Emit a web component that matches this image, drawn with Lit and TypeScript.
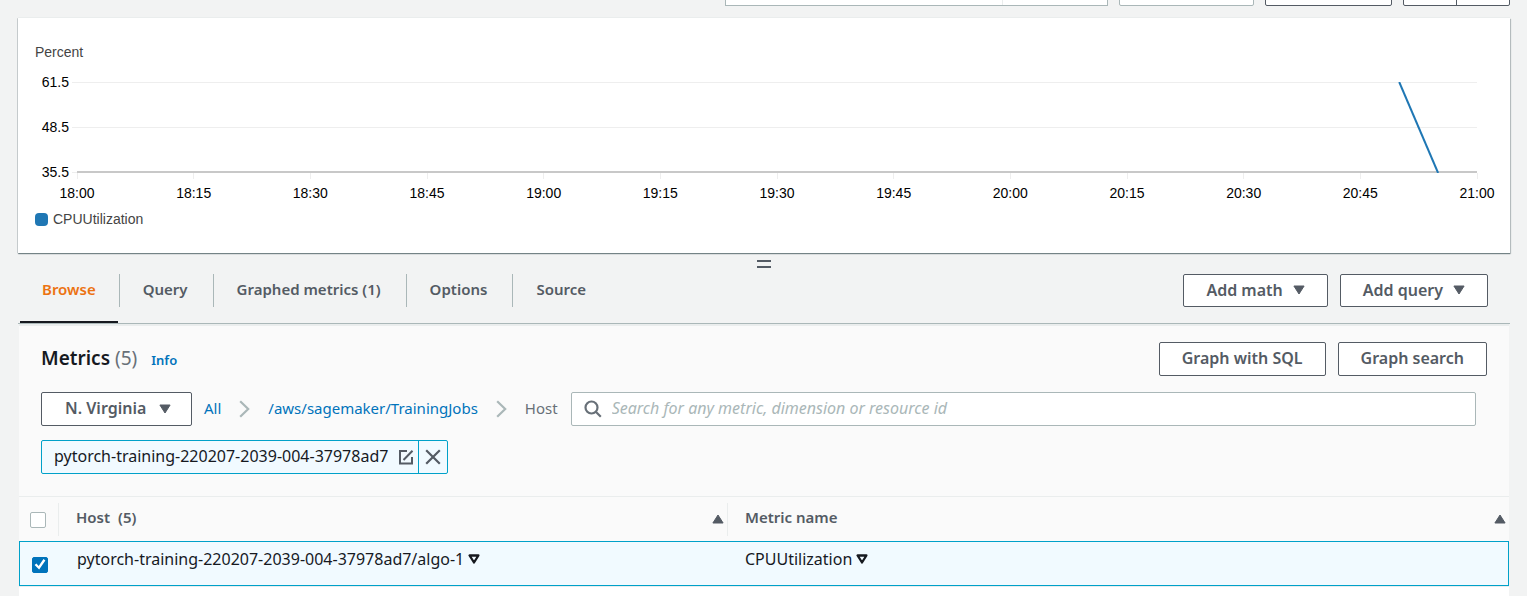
import { LitElement, html, css, svg } from "lit";
import { customElement, state } from "lit/decorators.js";

const caretDown = html`<svg class="caret" viewBox="0 0 12 10" width="12" height="10" aria-hidden="true"><path d="M.9 1h10.200L6 9z" fill="currentColor" stroke="currentColor" stroke-linejoin="round"/></svg>`;
const caretUp = html`<svg class="caret" viewBox="0 0 12 10" width="12" height="10" aria-hidden="true"><path d="M.9 9h10.200L6 1z" fill="currentColor" stroke="currentColor" stroke-linejoin="round"/></svg>`;
const caretHollow = html`<svg viewBox="0 0 12 10" width="12" height="10" aria-hidden="true"><path d="M1.600 1.500h8.800L6 8.500z" fill="none" stroke="currentColor" stroke-width="2.300" stroke-linejoin="round"/></svg>`;
const chevron = html`<svg viewBox="0 0 11 18" width="11" height="18" aria-hidden="true"><path d="M1.200 1.200l8 7.800-8 7.800" fill="none" stroke="#aab7b8" stroke-width="2.200"/></svg>`;

@customElement("metric-chart")
export class MetricChart extends LitElement {
  static styles = css`
    :host { display: block; background: #fff; padding: 24px 33px 23px 17px;
      box-shadow: 0 1px 1px 0 rgba(0, 28, 36, .4), 1px 1px 1px 0 rgba(0, 28, 36, .2), -1px 0 0 0 rgba(0, 28, 36, .12), 0 -1px 0 0 #eaeded;
      font: 14px/20px "Liberation Sans", Arial, sans-serif; color: #444; }
    .unit { height: 20px; }
    .plot { margin: 20px 0 5px 42px; }
    .canvas { display: block; width: 100%; height: 121px; overflow: visible; }
    .plot text { fill: #000; }
    .grid { stroke: #eee; stroke-width: 1; shape-rendering: crispEdges; }
    .axis { stroke: #c8c8c8; stroke-width: 2; shape-rendering: crispEdges; }
    .series { fill: none; stroke: #1f77b4; stroke-width: 2; vector-effect: non-scaling-stroke; }
    .legend { display: flex; align-items: center; gap: 5px; height: 22px; }
    .swatch { width: 13px; height: 13px; border-radius: 4px; background: #1f77b4; }
  `;
  private ticks = ["18:00", "18:15", "18:30", "18:45", "19:00", "19:15", "19:30", "19:45", "20:00", "20:15", "20:30", "20:45", "21:00"];
  private levels = ["61.5", "48.5", "35.5"];
  render() {
    return html`
      <div class="unit">Percent</div>
      <div class="plot">
        <svg class="canvas" role="img" aria-label="CPUUtilization">
          ${this.levels.map((v, i) => svg`
            <line class="grid" x1="-5" x2="100%" y1=${i * 45 + 0.5} y2=${i * 45 + 0.5}></line>
            <text x="-8" y=${i * 45 + 5} text-anchor="end">${v}</text>`)}
          ${this.ticks.map((t, i) => svg`
            <line class="grid" x1="${(i / 12) * 100}%" x2="${(i / 12) * 100}%" y1="91" y2="97"></line>
            <text x="${(i / 12) * 100}%" y="116" text-anchor="middle">${t}</text>`)}
          <line class="axis" x1="0" x2="100%" y1="90" y2="90"></line>
          <svg x="0" y="0" width="100%" height="91" viewBox="0 0 180 91" preserveAspectRatio="none">
            <path class="series" d="M170 0L175 91"></path>
          </svg>
        </svg>
      </div>
      <div class="legend"><span class="swatch"></span>CPUUtilization</div>
    `;
  }
}

@customElement("app-root")
export class AppRoot extends LitElement {
  static styles = css`
    * { box-sizing: border-box; }
    :host { box-sizing: border-box; display: flex; flex-direction: column; min-height: 100vh; background: #f2f3f3; color: #16191f; padding: 0 17px 0 18px;
      font: 15px/22px "Noto Sans", "Open Sans", sans-serif; }
    a { color: #0073bb; text-decoration: none; }
    button, select, input { font: inherit; }
    .toolbar { display: flex; justify-content: flex-end; gap: 11px; height: 6px; align-items: flex-end; margin-bottom: 12px; }
    .box { flex: none; height: 34px; padding: 0; border: 1px solid #aab7b8; border-radius: 2px; background: #fff; }
    .range { display: flex; width: 383px; border-radius: 0; }
    .range button { border: 0; background: none; flex: 1; }
    .range button + button { border-left: 1px solid #eaeded; flex: 0 0 105px; }
    .w135 { width: 135px; }
    .w127 { width: 127px; border-color: #545b64; }
    .pair { display: flex; width: 107px; border-color: #545b64; }
    .pair button { border: 0; background: none; flex: 1; }
    .pair button + button { border-left: 1px solid #545b64; }
    .handle { display: flex; flex-direction: column; gap: 4px; width: 14px; margin: 7px auto 0; padding: 0; border: 0; background: none; }
    .handle i { height: 2px; width: 14px; background: #545b64; }
    .tabbar { display: flex; align-items: flex-start; justify-content: space-between; margin-top: 6px; border-bottom: 1px solid #aab7b8; padding: 0 22px 0 2px; }
    .tabs { display: flex; }
    .tab { position: relative; height: 49px; padding: 0 25px 19px 24px; border: 0; background: none; color: #545b64; font-weight: 600; cursor: pointer; white-space: nowrap; }
    .tab + .tab::before { content: ""; position: absolute; left: 0; top: 0; height: 33px; border-left: 1px solid #aab7b8; }
    .tab:first-child { padding-left: 22px; padding-right: 23px; }
    .tab.active { color: #ec7211; }
    .tab.active::after { content: ""; position: absolute; left: 0; right: 1px; bottom: 0; height: 2px; background: #16191f; }
    .actions { display: flex; gap: 12px; }
    .btn { display: flex; align-items: center; justify-content: center; gap: 10px; height: 34px; padding: 0 22px 2px; border: 1px solid #545b64; border-radius: 2px; background: #fff; color: #545b64; font-size: 16px; font-weight: 600; white-space: nowrap; cursor: pointer; }
    .tabbar .btn { height: 33px; }
    .panel { flex: 1; display: flex; flex-direction: column; align-items: flex-start; margin: 0 1px; border-top: 2px solid #eaeded; background: #fafafa; }
    .head { align-self: stretch; display: flex; justify-content: space-between; padding: 16px 22px 0; }
    .title { display: flex; align-items: baseline; gap: 14px; }
    h2 { margin: 0; font-size: 19px; line-height: 32px; font-weight: 600; }
    .count { color: #687078; font-weight: 400; }
    .info { font-size: 13px; font-weight: 600; }
    .filters { align-self: stretch; display: flex; align-items: center; padding: 16px 33px 14px 22px; }
    .region { display: grid; align-items: center; width: 151px; height: 34px; border: 1px solid #545b64; border-radius: 2px; background: #fff; color: #545b64; font-size: 16px; font-weight: 600; }
    .region select { grid-area: 1 / 1; appearance: none; border: 0; background: none; color: inherit; height: 32px; padding: 0 0 2px 23px; }
    .region .caret { grid-area: 1 / 1; justify-self: end; margin-right: 20px; pointer-events: none; }
    .crumbs { display: flex; align-items: center; gap: 18px; margin: 0 13px 0 12px; color: #687078; white-space: nowrap; }
    .crumbs a, .crumbs span { padding-bottom: 3px; }
    .search { display: flex; align-items: center; gap: 10px; flex: 1; height: 34px; padding: 0 12px; border: 1px solid #aab7b8; border-radius: 2px; background: #fff; font-size: 16px; }
    .search input { flex: 1; min-width: 0; height: 32px; border: 0; outline: 0; padding: 0 0 3px; background: none; }
    .search input::placeholder { color: #aab7b8; font-style: italic; opacity: 1; }
    .token { display: flex; height: 34px; margin: 0 0 22px 22px; border: 1px solid #00a1c9; border-radius: 2px; background: #f1faff; font-size: 16px; line-height: 30px; padding-left: 12px; white-space: nowrap; }
    .icon { display: flex; align-items: center; justify-content: center; border: 0; background: none; padding: 0; color: #545b64; }
    .edit { width: 30px; padding-left: 5px; }
    .close { width: 29px; border-left: 1px solid #00a1c9; }
    table { width: 100%; border-collapse: separate; border-spacing: 0; table-layout: fixed; border-top: 1px solid #eaeded; }
    .c-check { width: 39px; }
    .c-host { width: 44.9%; }
    th { height: 44px; padding: 5px 0; text-align: left; font-weight: 600; color: #545b64; }
    .cell { display: flex; align-items: center; justify-content: space-between; height: 33px; padding: 0 3px 0 17px; border-left: 1px solid #eaeded; }
    .label { padding-bottom: 4px; }
    .host-count { margin-left: 8px; }
    td { height: 45px; padding: 0 0 9px 19px; background: #f1faff; border: solid #00a1c9; border-width: 1px 0; font-size: 16px; }
    td:first-child { border-left-width: 1px; padding: 0; }
    td:last-child { border-right-width: 1px; padding-left: 18px; }
    .name { display: flex; align-items: center; gap: 4px; white-space: nowrap; }
    .check { appearance: none; display: grid; place-items: center; width: 16px; height: 16px; margin: 2px 0 0 11px; border: 1px solid #aab7b8; border-radius: 2px; background: #fff; }
    td .check { margin-left: 12px; }
    .check:checked { border-color: #0073bb; background: #0073bb; }
    .check:checked::before { content: ""; width: 12px; height: 12px; background: #fff; clip-path: polygon(5% 55%, 20% 42%, 39% 62%, 79% 5%, 95% 16%, 43% 91%); }
    .rest { flex: 1; align-self: stretch; background: #fff; border-top: 1px solid #eaeded; }
  `;

  @state() private tab = 0;
  private tabNames = ["Browse", "Query", "Graphed metrics (1)", "Options", "Source"];

  render() {
    return html`
      <div class="toolbar">
        <div class="box range"><button aria-label="Time range"></button><button aria-label="Custom range"></button></div>
        <button class="box w135" aria-label="Graph type"></button>
        <button class="box w127" aria-label="Actions"></button>
        <div class="box pair"><button aria-label="Refresh"></button><button aria-label="Refresh options"></button></div>
      </div>
      <metric-chart></metric-chart>
      <button class="handle" aria-label="Resize"><i></i><i></i></button>
      <div class="tabbar">
        <div class="tabs" role="tablist">
          ${this.tabNames.map((n, i) => html`<button role="tab" aria-selected=${i === this.tab} class="tab ${i === this.tab ? "active" : ""}" @click=${() => (this.tab = i)}>${n}</button>`)}
        </div>
        <div class="actions">
          <button class="btn">Add math ${caretDown}</button>
          <button class="btn">Add query ${caretDown}</button>
        </div>
      </div>
      <section class="panel">
        <div class="head">
          <div class="title"><h2>Metrics <span class="count">(5)</span></h2><a class="info" href="#">Info</a></div>
          <div class="actions">
            <button class="btn">Graph with SQL</button>
            <button class="btn">Graph search</button>
          </div>
        </div>
        <div class="filters">
          <div class="region"><select aria-label="Region"><option>N. Virginia</option></select>${caretDown}</div>
          <nav class="crumbs"><a href="#">All</a>${chevron}<a href="#">/aws/sagemaker/TrainingJobs</a>${chevron}<span>Host</span></nav>
          <label class="search">
            <svg viewBox="0 0 18 18" width="18" height="18" aria-hidden="true"><g fill="none" stroke="#687078" stroke-width="2.200"><circle cx="7.500" cy="7.500" r="6"/><path d="M11.800 11.800l5 5"/></g></svg>
            <input aria-label="Search metrics" placeholder="Search for any metric, dimension or resource id">
          </label>
        </div>
        <div class="token">
          <span>pytorch-training-220207-2039-004-37978ad7</span>
          <button class="icon edit" aria-label="Edit filter"><svg viewBox="0 0 16 16" width="16" height="16"><g fill="none" stroke="currentColor" stroke-width="2"><path d="M9 2H2v12.500h12V8"/><path d="M5.500 11L14.500 1.800"/></g></svg></button>
          <button class="icon close" aria-label="Remove filter"><svg viewBox="0 0 16 16" width="16" height="16"><path d="M1.200 1.200l13.600 13.600M14.800 1.200L1.200 14.800" fill="none" stroke="currentColor" stroke-width="2.200"/></svg></button>
        </div>
        <table>
          <colgroup><col class="c-check"><col class="c-host"><col></colgroup>
          <thead><tr>
            <th><input class="check" type="checkbox" aria-label="Select all"></th>
            <th><div class="cell"><span class="label">Host<span class="host-count">(5)</span></span>${caretUp}</div></th>
            <th><div class="cell"><span class="label">Metric name</span>${caretUp}</div></th>
          </tr></thead>
          <tbody><tr>
            <td><input class="check" type="checkbox" checked aria-label="Select algo-1"></td>
            <td><div class="name">pytorch-training-220207-2039-004-37978ad7/algo-1 ${caretHollow}</div></td>
            <td><div class="name">CPUUtilization ${caretHollow}</div></td>
          </tr></tbody>
        </table>
        <div class="rest"></div>
      </section>
    `;
  }
}
